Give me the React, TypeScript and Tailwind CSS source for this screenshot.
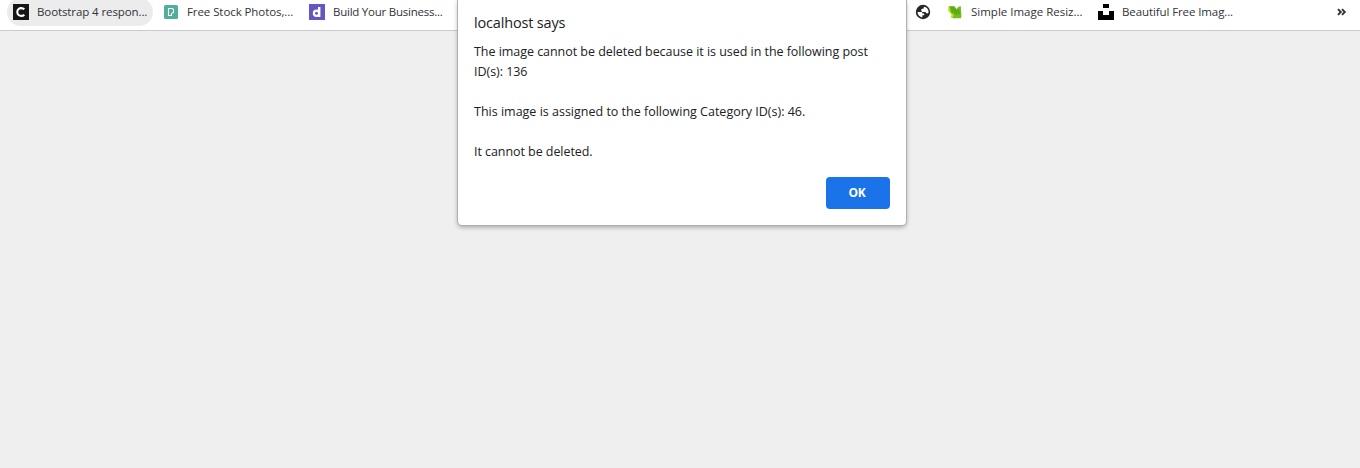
import type { ReactNode } from 'react';

function LetterC() {
  return (
    <svg width="16" height="16" viewBox="0 0 16 16" className="shrink-0">
      <rect width="16" height="16" fill="#151515" />
      <path d="M11.3 5.3C10.5 4.5 9.5 4.1 8.3 4.1C6 4.1 4.3 5.8 4.3 8S6 11.9 8.3 11.9C9.5 11.9 10.5 11.5 11.3 10.7" fill="none" stroke="#fff" strokeWidth="2.1" />
    </svg>
  );
}

function Pexels() {
  return (
    <svg width="16" height="16" viewBox="0 0 16 16" className="shrink-0">
      <rect x="1" y="1" width="14" height="14" rx="1.5" fill="#4fae9c" />
      <path d="M5.5 4.5H9.5L10.5 5.5V8.5L8.5 9.5V11.5H5.5Z" fill="none" stroke="#fff" strokeWidth="1.1" />
    </svg>
  );
}

function LetterD() {
  return (
    <svg width="16" height="16" viewBox="0 0 16 16" className="shrink-0">
      <rect width="16" height="16" fill="#6457c0" />
      <circle cx="7.5" cy="9.3" r="2.6" fill="none" stroke="#fff" strokeWidth="2.2" />
      <path d="M9 3h2.4v10H9Z" fill="#fff" />
    </svg>
  );
}

function Globe() {
  return (
    <svg width="16" height="16" viewBox="0 0 16 16" className="shrink-0">
      <circle cx="8" cy="8" r="7.2" fill="#242629" />
      <path d="M2.5 8H5.8C7 8 7.5 8.6 7.5 9.6H9.2V11.2H7.3V13.4C4.7 13.1 2.6 10.9 2.5 8Z" fill="#fff" />
      <path
        d="M9.5 2.7C12 3.4 13.6 5.5 13.6 8C13.5 8.8 13 9.4 12.3 9.4C11.2 9.4 11.1 8 10 8H8.4C7 8 6.2 7.2 6.2 6.2S6.8 4.7 7.8 4.7H8.6V3.7Z"
        fill="#fff"
      />
    </svg>
  );
}

function Resize() {
  return (
    <svg width="16" height="16" viewBox="0 0 16 16" className="shrink-0">
      <path d="M1.2 2.2 5 2.6 4.8 8.5 7.4 10.2 5.2 14.2 3.8 13.2 4.5 10.6 1.2 6.8Z" fill="#b9e51f" />
      <path d="M2.4 2.2H7.4L9.6 5 11.4 2.8 13.8 2.2 14.5 12.8 13.6 14.3H5.2L6.8 10.9 3.6 8.4Z" fill="#75bd1c" />
      <path d="M3.2 2.6 7.2 2.5 9.4 5.8 12.6 5.2 13 10.6 9 10.8 4.6 7.5Z" fill="#5faa18" />
    </svg>
  );
}

function Unsplash() {
  return (
    <svg width="16" height="16" viewBox="0 0 16 16" className="shrink-0">
      <path d="M5 0h6v4H5ZM0 7h5v4h6V7h5v9H0Z" fill="#000" />
    </svg>
  );
}

function Bookmark({ icon, children, className = '' }: { icon: ReactNode; children?: ReactNode; className?: string }) {
  return (
    <div className={`flex h-7 shrink-0 items-center gap-2 rounded-full px-1.5 ${className}`}>
      {icon}
      {children && <span className="whitespace-nowrap">{children}</span>}
    </div>
  );
}

export default function App() {
  return (
    <div className="relative h-[468px] w-[1360px] overflow-hidden bg-[#efefef] font-['Open_Sans','Noto_Sans',sans-serif] text-[#202124]">
      <div className="flex h-[31px] justify-between border-b border-[#cbcbcb] bg-white pl-[7px] text-[11.5px] text-[#303338]">
        <div className="-mt-0.5 flex gap-1">
          <Bookmark icon={<LetterC />} className="w-[146px] bg-[#ececec] tracking-[-0.1px]">Bootstrap 4 respon...</Bookmark>
          <Bookmark icon={<Pexels />} className="w-[142px] tracking-[-0.08px]">Free Stock Photos,...</Bookmark>
          <Bookmark icon={<LetterD />} className="w-[146px] tracking-[-0.24px]">Build Your Business...</Bookmark>
        </div>
        <div className="-mt-0.5 flex gap-1">
          <Bookmark icon={<Globe />} />
          <Bookmark icon={<Resize />} className="w-[147px]">Simple Image Resiz...</Bookmark>
          <Bookmark icon={<Unsplash />} className="mr-[94px] w-[147px] tracking-[-0.1px]">Beautiful Free Imag...</Bookmark>
          <div className="flex h-7 w-[23px] items-center">
            <svg width="10" height="8" viewBox="0 0 10 8" fill="none" stroke="#303236" strokeWidth="1.9">
              <path d="M1 1.2 3.8 4 1 6.8M5 1.2 7.8 4 5 6.8" />
            </svg>
          </div>
        </div>
      </div>

      <div
        role="alertdialog"
        className="absolute top-0 left-[458px] h-[225px] w-[448px] rounded-b bg-white px-4 pt-3 shadow-[0_0_0_1px_#b0b0b0,0_2px_5px_rgba(0,0,0,0.35)]"
      >
        <h1 className="h-[30px] text-[14.5px] leading-[22px] tracking-[-0.17px]">localhost says</h1>
        <div className="text-[12.5px] leading-5 whitespace-nowrap">
          <p className="tracking-[-0.04px]">The image cannot be deleted because it is used in the following post</p>
          <p className="tracking-[-0.04px]">ID(s): 136</p>
          <p className="mt-5">This image is assigned to the following Category ID(s): 46.</p>
          <p className="mt-5 tracking-[-0.06px]">It cannot be deleted.</p>
        </div>
        <div className="mt-[15px] flex justify-end">
          <button className="h-8 w-16 rounded bg-[#1a73e8] pr-0.5 text-xs font-bold tracking-[-0.3px] text-white">OK</button>
        </div>
      </div>
    </div>
  );
}
